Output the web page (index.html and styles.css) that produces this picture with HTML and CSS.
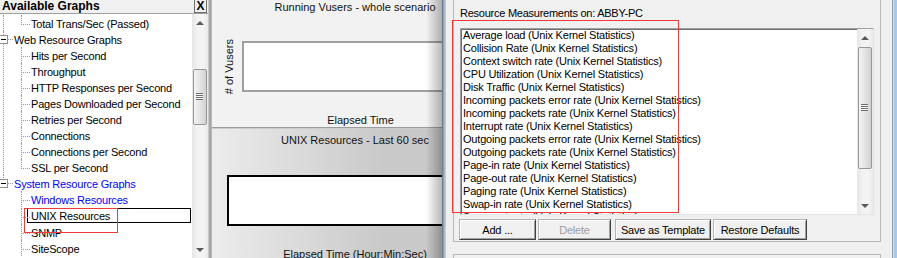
FILE: index.html
```html
<!DOCTYPE html>
<html lang="en">
<head>
    <meta charset="UTF-8">
    <title>Resource Graphs</title>
    <link rel="stylesheet" href="styles.css">
</head>
<body>
    <div class="screen">
        <!-- Available Graphs -->
        <div class="graphs-pane">
            <div class="pane-head">
                <span class="pane-title">Available Graphs</span>
                <span class="pane-close">X</span>
            </div>
            <div class="pane-body">
                <ul class="tree">
                    <li class="node no-label">
                        <ul class="branch">
                            <li class="leaf last">Total Trans/Sec (Passed)</li>
                        </ul>
                    </li>
                    <li class="node">
                        <div class="node-label"><span class="toggle"></span>Web Resource Graphs</div>
                        <ul class="branch">
                            <li class="leaf">Hits per Second</li>
                            <li class="leaf">Throughput</li>
                            <li class="leaf">HTTP Responses per Second</li>
                            <li class="leaf">Pages Downloaded per Second</li>
                            <li class="leaf">Retries per Second</li>
                            <li class="leaf">Connections</li>
                            <li class="leaf">Connections per Second</li>
                            <li class="leaf last">SSL per Second</li>
                        </ul>
                    </li>
                    <li class="node last">
                        <div class="node-label link"><span class="toggle"></span>System Resource Graphs</div>
                        <ul class="branch">
                            <li class="leaf link">Windows Resources</li>
                            <li class="leaf focused"><span>UNIX Resources</span></li>
                            <li class="leaf">SNMP</li>
                            <li class="leaf">SiteScope</li>
                        </ul>
                    </li>
                </ul>
                <div class="vscroll tree-scroll">
                    <div class="sb-btn up"></div>
                    <div class="sb-track"><div class="sb-thumb"></div></div>
                    <div class="sb-btn down"></div>
                </div>
            </div>
        </div>
        <div class="sash"></div>

        <!-- Graficos -->
        <div class="charts-pane">
            <div class="chart chart-top">
                <div class="chart-title">Running Vusers - whole scenario</div>
                <div class="chart-grid">
                    <div class="y-label">#&nbsp;of Vusers</div>
                    <div class="plot plot-gray"></div>
                    <div class="x-label">Elapsed Time</div>
                </div>
            </div>
            <div class="chart chart-bottom">
                <div class="chart-title">UNIX Resources - Last 60 sec</div>
                <div class="plot plot-black"></div>
                <div class="x-label">Elapsed Time (Hour:Min:Sec)</div>
            </div>
        </div>
        <div class="splitter"></div>

        <!-- Medicoes -->
        <div class="props-pane">
            <div class="groups">
                <div class="group group-measure">
                    <div class="group-label">Resource Measurements on: ABBY-PC</div>
                    <div class="listbox">
                        <ul class="list-items">
                            <li>Average load (Unix Kernel Statistics)</li>
                            <li>Collision Rate (Unix Kernel Statistics)</li>
                            <li>Context switch rate (Unix Kernel Statistics)</li>
                            <li>CPU Utilization (Unix Kernel Statistics)</li>
                            <li>Disk Traffic (Unix Kernel Statistics)</li>
                            <li>Incoming packets error rate (Unix Kernel Statistics)</li>
                            <li>Incoming packets rate (Unix Kernel Statistics)</li>
                            <li>Interrupt rate (Unix Kernel Statistics)</li>
                            <li>Outgoing packets error rate (Unix Kernel Statistics)</li>
                            <li>Outgoing packets rate (Unix Kernel Statistics)</li>
                            <li>Page-in rate (Unix Kernel Statistics)</li>
                            <li>Page-out rate (Unix Kernel Statistics)</li>
                            <li>Paging rate (Unix Kernel Statistics)</li>
                            <li>Swap-in rate (Unix Kernel Statistics)</li>
                            <li>Swap-out rate (Unix Kernel Statistics)</li>
                        </ul>
                        <div class="vscroll list-scroll">
                            <div class="sb-btn up"></div>
                            <div class="sb-track"><div class="sb-thumb"></div></div>
                            <div class="sb-btn down"></div>
                        </div>
                    </div>
                    <div class="button-row">
                        <button class="win-btn btn-add">Add ...</button>
                        <button class="win-btn btn-delete" disabled>Delete</button>
                        <button class="win-btn btn-save">Save as Template</button>
                        <button class="win-btn btn-restore">Restore Defaults</button>
                    </div>
                </div>
                <div class="group group-next"></div>
            </div>
            <div class="edge"></div>
        </div>

        <!-- Marcacoes vermelhas -->
        <div class="mark mark-tree"></div>
        <div class="mark mark-list"></div>
    </div>
</body>
</html>
```

FILE: styles.css
```css
/* Base */
* {
    margin: 0;
    padding: 0;
    box-sizing: border-box;
}

body {
    width: 897px;
    height: 258px;
    overflow: hidden;
    font-family: "Liberation Sans", Arial, sans-serif;
    font-size: 11px;
    color: #000;
    background: #f0f0f0;
}

.screen {
    position: relative;
    display: flex;
    height: 258px;
}

/* Painel Available Graphs */
.graphs-pane {
    width: 208px;
    display: flex;
    flex-direction: column;
    background: #fff;
}

.pane-head {
    height: 14px;
    display: flex;
    justify-content: space-between;
    align-items: flex-start;
    background: #f0f0f0;
    border-bottom: 1px solid #a0a0a0;
}

.pane-title {
    font-size: 12px;
    font-weight: bold;
    line-height: 13px;
    padding-left: 2px;
}

.pane-close {
    width: 13px;
    height: 13px;
    margin-right: 1px;
    border: 1px solid #6d6d6d;
    border-top: 0;
    font-size: 12px;
    font-weight: bold;
    line-height: 12px;
    text-align: center;
}

.pane-body {
    flex: 1;
    display: flex;
    min-height: 0;
}

.tree {
    flex: 1;
    list-style: none;
    padding-top: 1px;
    overflow: hidden;
    letter-spacing: -0.2px;
}

.branch {
    list-style: none;
}

.node {
    position: relative;
}

/* linha principal */
.node::before {
    content: '';
    position: absolute;
    left: 3px;
    top: 0;
    bottom: 0;
    border-left: 1px dotted #9a9a9a;
}

.node.last::before {
    bottom: auto;
    height: 9px;
}

.node-label {
    position: relative;
    height: 16px;
    line-height: 18px;
    padding-left: 14px;
    white-space: nowrap;
}

.node-label::before {
    content: '';
    position: absolute;
    left: 8px;
    top: 8px;
    width: 5px;
    border-top: 1px dotted #9a9a9a;
}

.toggle {
    position: absolute;
    left: -1px;
    top: 4px;
    width: 9px;
    height: 9px;
    border: 1px solid #919191;
    background: #fff;
    z-index: 1;
}

.toggle::after {
    content: '';
    position: absolute;
    left: 1px;
    top: 3px;
    width: 5px;
    height: 1px;
    background: #000;
}

.leaf {
    position: relative;
    height: 16px;
    line-height: 18px;
    padding-left: 31px;
    white-space: nowrap;
}

.leaf::before {
    content: '';
    position: absolute;
    left: 21px;
    top: 0;
    width: 8px;
    height: 9px;
    border-left: 1px dotted #9a9a9a;
    border-bottom: 1px dotted #9a9a9a;
}

.leaf::after {
    content: '';
    position: absolute;
    left: 21px;
    top: 9px;
    bottom: 0;
    border-left: 1px dotted #9a9a9a;
}

.leaf.last::after {
    display: none;
}

.link {
    color: #0000ff;
}

.leaf.focused span {
    display: block;
    height: 15px;
    margin: 1px 1px 0 -4px;
    padding-left: 3px;
    border: 1px solid #000;
    line-height: 14px;
}

.sash {
    width: 4px;
    background: linear-gradient(to right, #d8d8d8, #9a9a9a 50%, #c4c4c4);
}

/* Barras de rolagem */
.vscroll {
    width: 16px;
    display: flex;
    flex-direction: column;
    background: linear-gradient(to right, #e6e6e6, #f4f4f4 40%, #f4f4f4 70%, #e9e9e9);
}

.sb-btn {
    height: 17px;
    display: flex;
    justify-content: center;
    align-items: center;
}

.sb-btn.up::before,
.sb-btn.down::before {
    content: '';
    border-style: solid;
    border-color: transparent;
}

.sb-btn.up::before {
    border-width: 0 4px 4px;
    border-bottom-color: #5a5a5a;
}

.sb-btn.down::before {
    border-width: 4px 4px 0;
    border-top-color: #5a5a5a;
}

.sb-track {
    flex: 1;
}

.sb-thumb {
    position: relative;
    margin: 0 1px;
    border: 1px solid #979797;
    border-radius: 2px;
    background: linear-gradient(to right, #f4f4f4, #e4e4e4 50%, #d2d2d2);
}

.sb-thumb::after {
    content: '';
    position: absolute;
    left: calc(50% - 4px);
    top: calc(50% - 4px);
    width: 7px;
    height: 7px;
    background: repeating-linear-gradient(to bottom, #6d6d6d 0 1px, #f8f8f8 1px 2px);
}

.tree-scroll .sb-thumb {
    margin-top: 38px;
    height: 56px;
}

.list-scroll .sb-thumb {
    margin-top: 1px;
    height: 122px;
}

/* Graficos */
.charts-pane {
    position: relative;
    width: 230px;
    display: flex;
    flex-direction: column;
    overflow: hidden;
}

.charts-pane::after {
    content: '';
    position: absolute;
    top: 0;
    right: 0;
    bottom: 0;
    width: 16px;
    background: linear-gradient(to right, rgba(0, 0, 0, 0), rgba(0, 0, 0, 0.28));
}

.chart {
    width: 286px;
}

.chart-title,
.x-label {
    line-height: 14px;
    text-align: center;
    color: #111;
}

.chart-top {
    height: 128px;
    background: #f2f2f2;
    border-bottom: 1px solid #9c9c9c;
}

.chart-grid {
    display: grid;
    grid-template-columns: 30px 237px;
    grid-template-rows: 51px auto;
    margin-top: 27px;
}

.y-label {
    writing-mode: vertical-rl;
    transform: rotate(180deg);
    line-height: 14px;
    margin-left: 10px;
    align-self: center;
    white-space: nowrap;
    color: #111;
}

.plot {
    height: 51px;
    background: #fff;
}

.plot-gray {
    border: 2px solid #a0a0a0;
}

.chart-grid .x-label {
    grid-column: 2;
    margin-top: 21px;
}

.chart-bottom {
    flex: 1;
    padding-top: 4px;
    border-top: 1px solid #cdcdcd;
    background: linear-gradient(to right, #ececec, #c9c9c9 60%);
}

.plot-black {
    width: 254px;
    margin: 28px 0 0 15px;
    border: 2px solid #000;
}

.chart-bottom .x-label {
    margin-top: 21px;
}

.splitter {
    width: 4px;
    background: linear-gradient(to right, #5f6d7d, #9db2c8 50%, #c9d3dd);
}

/* Painel de medicoes */
.props-pane {
    flex: 1;
    display: flex;
    padding-left: 7px;
    border-right: 3px solid #a9c9ea;
    letter-spacing: -0.2px;
}

.groups {
    width: 428px;
    margin-right: 11px;
}

.group {
    border: 1px solid #b9b9b9;
}

.group-measure {
    border-top: 0;
    padding: 7px 6px 1px;
}

.group-label {
    line-height: 13px;
    letter-spacing: -0.25px;
}

.listbox {
    display: flex;
    height: 187px;
    margin-top: 8px;
    background: #fff;
    border: 1px solid;
    border-color: #a0a0a0 #e3e3e3 #e3e3e3 #a0a0a0;
    box-shadow: inset 1px 1px #6d6d6d;
}

.list-items {
    flex: 1;
    list-style: none;
    overflow: hidden;
    padding-left: 2px;
}

.list-items li {
    height: 13px;
    line-height: 13px;
    white-space: nowrap;
}

.button-row {
    display: flex;
    margin: 4px 0 0 -1px;
}

.win-btn {
    height: 21px;
    font-family: inherit;
    font-size: 11px;
    letter-spacing: -0.2px;
    color: #000;
    background: #f0f0f0;
    border: 1px solid;
    border-color: #b4b4b4 #404040 #404040 #b4b4b4;
    box-shadow: inset 1px 1px #fff, inset -1px -1px #a0a0a0;
}

.btn-add { width: 77px; }
.btn-delete { width: 73px; margin-left: 2px; color: #a0a0a0; }
.btn-save { width: 96px; margin-left: 4px; }
.btn-restore { width: 94px; margin-left: 2px; }

.group-next {
    height: 20px;
    margin-top: 12px;
}

.edge {
    width: 2px;
    border-left: 1px solid #9c9c9c;
    background: #dcdcdc;
}

/* Marcacoes vermelhas */
.mark {
    position: absolute;
    border: 1px solid #f03a3a;
}

.mark-tree {
    left: 24px;
    top: 208px;
    width: 94px;
    height: 25px;
}

.mark-list {
    left: 452px;
    top: 20px;
    width: 227px;
    height: 193px;
}
```
